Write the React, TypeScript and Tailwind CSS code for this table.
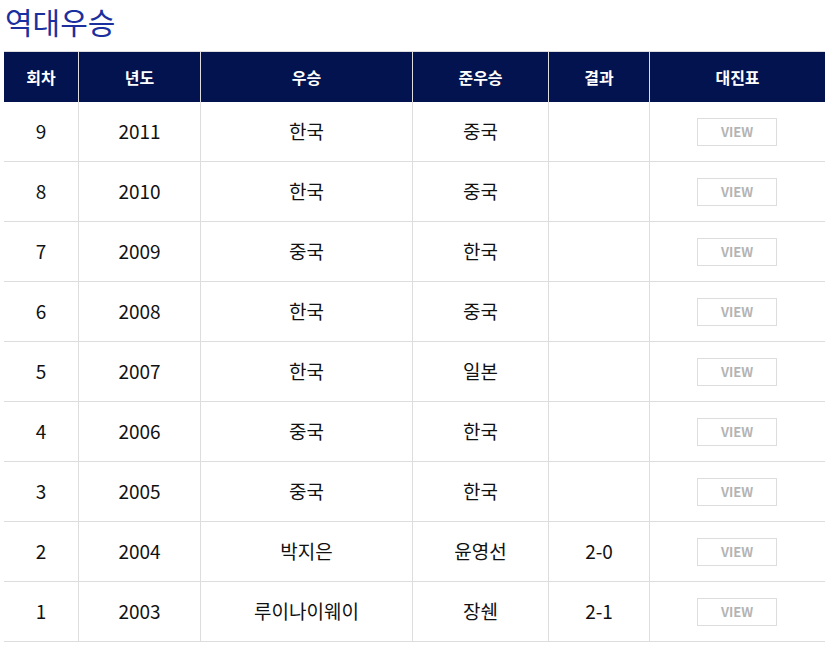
import React from "react";

const rows = [
  ["9", "2011", "한국", "중국", ""],
  ["8", "2010", "한국", "중국", ""],
  ["7", "2009", "중국", "한국", ""],
  ["6", "2008", "한국", "중국", ""],
  ["5", "2007", "한국", "일본", ""],
  ["4", "2006", "중국", "한국", ""],
  ["3", "2005", "중국", "한국", ""],
  ["2", "2004", "박지은", "윤영선", "2-0"],
  ["1", "2003", "루이나이웨이", "장쉔", "2-1"],
];

const widths = ["w-[75px]", "w-[122px]", "w-[212px]", "w-[136px]", "w-[101px]", "w-[175px]"];
const heads = ["회차", "년도", "우승", "준우승", "결과", "대진표"];

export default function App() {
  return (
    <div className="bg-white w-[837px] h-[653px] font-['Noto_Sans_CJK_KR','Noto_Sans',sans-serif]">
      <h1 className="pl-[5px] pt-[1px] h-[51px] text-[30px] leading-[40px] text-[#1b2f9e] font-normal">
        역대우승
      </h1>
      <div className="ml-[4px] w-[821px]">
        <div className="flex h-[51px] bg-[#03134f] border-t border-[#dddddd]">
          {heads.map((h, i) => (
            <div
              key={h}
              className={`${widths[i]} flex items-center justify-center text-white font-bold text-[16px] ${i < 5 ? "border-r border-[#dddddd]" : ""}`}
            >
              {h}
            </div>
          ))}
        </div>
        {rows.map((r) => (
          <div key={r[0]} className="flex h-[60px] border-b border-[#dddddd] text-[19px] text-[#111111]">
            {r.map((c, i) => (
              <div
                key={i}
                className={`${widths[i]} flex items-center justify-center border-r border-[#dddddd]`}
              >
                {c}
              </div>
            ))}
            <div className="w-[175px] flex items-center pl-[47px]">
              <div className="w-[80px] h-[28px] border border-[#dddddd] flex items-center justify-center pt-[1px] text-[13px] font-bold text-[#b4b4b4]">
                VIEW
              </div>
            </div>
          </div>
        ))}
      </div>
    </div>
  );
}
